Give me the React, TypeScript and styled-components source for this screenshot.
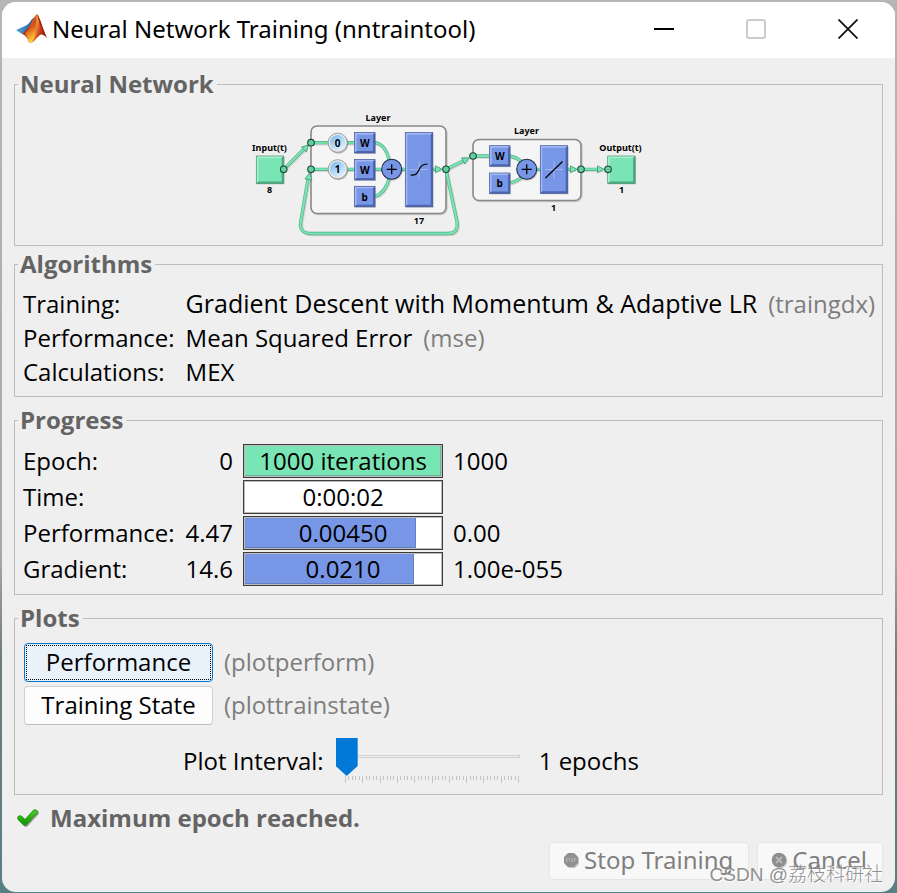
import React, { useState } from "react";
import styled, { createGlobalStyle } from "styled-components";

const FONT = '"Open Sans", "Noto Sans", sans-serif';
const WIDE_FONT = '"Noto Sans", "Open Sans", sans-serif';

const GlobalStyle = createGlobalStyle`
  *, *::before, *::after { box-sizing: border-box; }
  body {
    margin: 0;
    font-family: ${FONT};
    font-size: 24px;
    line-height: 34px;
    color: #000;
    background: #8d8d8d;
  }
  button, input { font: inherit; color: inherit; }
`;

const Desktop = styled.div`
  display: flex;
  min-height: 100vh;
  padding: 2px;
  background: linear-gradient(#b6b6b6 0%, #a8a8a8 62%, #6d7b7d 74%, #578084 100%);
`;

const Window = styled.main`
  position: relative;
  flex: 1;
  min-width: 0;
  display: flex;
  flex-direction: column;
  border-radius: 14px;
  overflow: hidden;
  background: #efefef;
`;

const TitleBar = styled.header`
  display: flex;
  align-items: center;
  height: 56px;
  padding: 0 1px 2px 13px;
  background: #fff;
`;

const Title = styled.h1`
  flex: 1;
  margin: 0 0 0 5px;
  font-family: ${WIDE_FONT};
  font-size: 24px;
  font-weight: 400;
  line-height: 34px;
  white-space: nowrap;
`;

const CaptionButton = styled.button`
  display: flex;
  align-items: center;
  justify-content: center;
  width: 92px;
  height: 54px;
  padding: 0;
  border: 0;
  background: transparent;
`;

const Body = styled.div`
  flex: 1;
  display: flex;
  flex-direction: column;
  padding: 12px;
`;

const Group = styled.fieldset<{ $gap?: number }>`
  min-width: 0;
  margin: ${(p) => p.$gap ?? 0}px 0 0;
  padding: 8px 8px 7px;
  border: 1px solid #bdbdbd;
`;

const GroupTitle = styled.legend`
  margin-left: -5px;
  padding: 0 3px 2px 2px;
  font-weight: 700;
  line-height: 27px;
  color: #646464;
`;

const DiagramBox = styled.div`
  display: flex;
  justify-content: center;
  padding-top: 1px;
`;

const AlgorithmList = styled.dl`
  display: grid;
  grid-template-columns: max-content 1fr;
  column-gap: 11px;
  margin: 0;
  white-space: nowrap;

  dt, dd { margin: 0; }
`;

const AlgorithmName = styled.span`
  font-size: 25px;
  line-height: 32px;
`;

const Hint = styled.span`
  margin-left: 11px;
  color: #7d7d7d;
`;

const ProgressGrid = styled.div`
  display: grid;
  grid-template-columns: max-content max-content 200px 1fr;
  gap: 2px 10px;
  padding: 1px 0;
  white-space: nowrap;
`;

const Minimum = styled.span`
  padding-left: 1px;
  text-align: right;
`;

const Bar = styled.div`
  display: grid;
  height: 34px;
  padding: 1px;
  border: 1px solid #3c3c3c;
  background: #bcbcbc;

  > * { grid-area: 1 / 1; }
`;

const BarTrack = styled.div`
  background: #fff;
`;

const BarFill = styled.div<{ $color: string }>`
  height: 30px;
  background: ${(p) => p.$color};
  box-shadow: inset -1px -1px 0 rgba(60, 70, 110, 0.3);
`;

const BarText = styled.span`
  line-height: 30px;
  text-align: center;
`;

const PlotRow = styled.div`
  display: flex;
  align-items: center;
  margin: 2px 0 4px 1px;
  white-space: nowrap;

  & + & { margin-top: 0; }

  ${Hint} { padding-bottom: 2px; }
`;

const PlotButton = styled.button<{ $focused?: boolean }>`
  width: 189px;
  height: 39px;
  padding: 1px;
  border: 1px solid ${(p) => (p.$focused ? "#0078d4" : "#d0d0d0")};
  border-bottom-color: ${(p) => (p.$focused ? "#0078d4" : "#bcbcbc")};
  border-radius: 4px;
  background: ${(p) => (p.$focused ? "#e9f2fb" : "#fdfdfd")};

  span {
    display: block;
    padding-bottom: 2px;
    line-height: 31px;
    border: 1px dotted ${(p) => (p.$focused ? "#000" : "transparent")};
  }
`;

const IntervalRow = styled.div`
  display: flex;
  align-items: center;
  gap: 8px;
  padding: 9px 0 3px 160px;
  white-space: nowrap;

  label { padding-right: 4px; }
`;

const SliderBox = styled.div`
  width: 195px;
  height: 46px;
`;

const Slider = styled.input`
  appearance: none;
  display: block;
  width: 195px;
  height: 38px;
  margin: 0;
  background: linear-gradient(#f0f0f0, #f0f0f0) 12px 18px / 171px 1px no-repeat,
    linear-gradient(#d0d0d0, #d0d0d0) 11px 17px / 173px 3px no-repeat;

  &::-webkit-slider-runnable-track { height: 38px; }
  &::-webkit-slider-thumb {
    appearance: none;
    width: 22px;
    height: 38px;
    border: 0;
    border-radius: 0;
    background: #0078d7;
    clip-path: polygon(0 0, 100% 0, 100% 74%, 50% 100%, 0 74%);
  }
`;

const Ticks = styled.svg`
  display: block;
`;

const Status = styled.p`
  display: flex;
  align-items: center;
  gap: 11px;
  margin: 6px 0 7px 1px;
  font-weight: 700;
  color: #646464;
`;

const Actions = styled.div`
  display: flex;
  justify-content: flex-end;
  gap: 8px;
`;

const ActionButton = styled.button`
  display: flex;
  align-items: center;
  gap: 4px;
  height: 38px;
  padding: 0 15px 2px 13px;
  border: 1px solid #e6e6e6;
  border-radius: 4px;
  background: #f8f8f8;
  font-family: ${WIDE_FONT};
  white-space: nowrap;

  &:disabled { color: #808080; }
`;

const Watermark = styled.div`
  position: absolute;
  right: 12px;
  bottom: 5px;
  font-family: "Liberation Sans", "Noto Sans CJK SC", sans-serif;
  font-size: 19px;
  font-weight: 300;
  line-height: 24px;
  color: rgba(130, 130, 130, 0.9);
  text-shadow: 1px 1px 0 rgba(255, 255, 255, 0.8);
  white-space: nowrap;
  pointer-events: none;
`;

const DiagramSvg = styled.svg`
  display: block;
  font-family: ${WIDE_FONT};
  font-weight: 700;
`;

const GREEN = "#7ae5b4";
const GREEN_DARK = "#3f9a72";
const BLUE = "#7896e6";

const Block = ({ x, y, w, h, color = BLUE, label }: { x: number; y: number; w: number; h: number; color?: string; label?: string }) => {
  const light = color === BLUE ? "#a4b9f4" : "#a8f3d0";
  const dark = color === BLUE ? "#4c66b4" : "#48ab82";
  return (
    <g>
      <rect x={x + 1} y={y + 1} width={w} height={h} fill="#000" opacity="0.18" />
      <rect x={x} y={y} width={w} height={h} fill={color} />
      <path d={`M${x} ${y + h}V${y}H${x + w}l-2 2H${x + 2}V${y + h - 2}z`} fill={light} />
      <path d={`M${x} ${y + h}H${x + w}V${y}l-2 2V${y + h - 2}H${x + 2}z`} fill={dark} />
      <rect x={x} y={y} width={w} height={h} fill="none" stroke={color === BLUE ? "#465a94" : "#4d9175"} strokeWidth="0.7" />
      {label && (
        <text x={x + w / 2} y={y + h / 2 + 4} textAnchor="middle" fontSize="10">{label}</text>
      )}
    </g>
  );
};

const Wire = ({ d }: { d: string }) => (
  <g fill="none" strokeLinejoin="round">
    <path d={d} stroke="#000" strokeWidth="3.4" opacity="0.13" transform="translate(1 1)" />
    <path d={d} stroke="#4fae85" strokeWidth="3.3" />
    <path d={d} stroke={GREEN} strokeWidth="2.1" />
  </g>
);

const Arrow = ({ x, y, angle = 0 }: { x: number; y: number; angle?: number }) => (
  <path d="M0 0L-6.5 -3.5V3.5z" fill={GREEN} stroke={GREEN_DARK} strokeWidth="0.8" transform={`translate(${x} ${y}) rotate(${angle})`} />
);

const Node = ({ x, y }: { x: number; y: number }) => (
  <circle cx={x} cy={y} r="3.3" fill="#62cf9d" stroke="#1d4837" strokeWidth="1.1" />
);

const Sum = ({ x, y }: { x: number; y: number }) => (
  <g>
    <circle cx={x + 0.7} cy={y + 1} r="10.4" fill="#000" opacity="0.2" />
    <circle cx={x} cy={y} r="10" fill={BLUE} stroke="#222c4a" strokeWidth="1.1" />
    <path d={`M${x - 5} ${y}h10M${x} ${y - 5}v10`} stroke="#000" strokeWidth="1.3" />
  </g>
);

const Delay = ({ x, y, label }: { x: number; y: number; label: string }) => (
  <g>
    <circle cx={x + 0.7} cy={y + 1} r="10" fill="#000" opacity="0.25" />
    <circle cx={x} cy={y} r="9.6" fill="#e9e9e9" stroke="#8b8b8b" strokeWidth="0.8" />
    <circle cx={x} cy={y} r="7.8" fill="url(#dial)" />
    <text x={x} y={y + 4} textAnchor="middle" fontSize="10">{label}</text>
  </g>
);

const LayerFrame = ({ x, y, w, h }: { x: number; y: number; w: number; h: number }) => (
  <g>
    <rect x={x + 1} y={y + 1} width={w} height={h} rx="6" fill="none" stroke="#000" strokeWidth="1.4" opacity="0.15" />
    <rect x={x} y={y} width={w} height={h} rx="6" fill="#f5f5f5" stroke="#888" strokeWidth="1.6" />
  </g>
);

const Caption = ({ x, y, children }: { x: number; y: number; children: string }) => (
  <text x={x} y={y} textAnchor="middle" fontSize="9">{children}</text>
);

const NetworkDiagram = () => (
  <DiagramSvg width="401" height="130" viewBox="248 108 401 130" role="img" aria-label="Network diagram">
    <defs>
      <linearGradient id="dial" x1="0" y1="0" x2="0.7" y2="1">
        <stop offset="0" stopColor="#74b8f2" />
        <stop offset="1" stopColor="#dff2ff" />
      </linearGradient>
    </defs>
    <LayerFrame x={311} y={126} w={135} h={87.5} />
    <LayerFrame x={473} y={139.5} w={108} h={61} />

    <Block x={256.3} y={156} w={27.4} h={27.4} color={GREEN} />
    <Block x={607.7} y={156} w={27.4} h={27.4} color={GREEN} />

    <Wire d="M283.7 169.3L306 147" />
    <Wire d="M446 170L457 222Q458.500 233.500 448 233.500H311Q299.500 233.500 300.500 223L308 179" />
    <Wire d="M311 142.700H354M311 169.300H405M433 169.300H440" />
    <Wire d="M375 142.700Q385 144 389 160M375 196.500Q385 193 389 179" />
    <Wire d="M446 169.300L467 159M473 156H489M510 156Q516 157 521 161M510 183Q517 181 521 178M537 169.300H541M568 169.300H575M581 169.300H602" />

    <Arrow x={308.5} y={145} angle={-45} />
    <Arrow x={309.5} y={173} angle={-81} />
    <Arrow x={442} y={169.3} />
    <Arrow x={469} y={158} angle={-27} />
    <Arrow x={577} y={169.3} />
    <Arrow x={604} y={169.3} />

    <Delay x={337.7} y={142.7} label="0" />
    <Delay x={337.7} y={169.3} label="1" />
    <Block x={354.5} y={132.5} w={20.5} h={20.5} label="W" />
    <Block x={354.5} y={159.5} w={20.5} h={20.5} label="W" />
    <Block x={354.5} y={186.3} w={20.5} h={20.5} label="b" />
    <Sum x={391.7} y={169.3} />
    <Block x={405.3} y={132.5} w={27.4} h={74.3} />
    <path d="M419 161v18M410 169.500h18" stroke="#a3b6f0" strokeWidth="1" />
    <path d="M410.500 175C422 176 416 164 427.500 164" fill="none" stroke="#000" strokeWidth="1.2" />

    <Block x={489.5} y={145.700} w={20.5} h={20.5} label="W" />
    <Block x={489.5} y={173} w={20.5} h={20.5} label="b" />
    <Sum x={526.7} y={169.3} />
    <Block x={540.3} y={145.700} w={27.4} h={47.6} />
    <path d="M554 161v18M545 169.500h18" stroke="#a3b6f0" strokeWidth="1" />
    <path d="M545.500 178L562.500 161.500" stroke="#000" strokeWidth="1.2" />

    <Node x={283.7} y={169.3} />
    <Node x={311} y={142.7} />
    <Node x={311} y={169.3} />
    <Node x={446} y={169.3} />
    <Node x={473} y={156} />
    <Node x={581} y={169.3} />
    <Node x={608} y={169.3} />

    <Caption x={378} y={121}>Layer</Caption>
    <Caption x={269.5} y={151}>Input(t)</Caption>
    <Caption x={269.5} y={193}>8</Caption>
    <Caption x={419} y={224}>17</Caption>
    <Caption x={526.5} y={134}>Layer</Caption>
    <Caption x={553.5} y={211}>1</Caption>
    <Caption x={620.5} y={151}>Output(t)</Caption>
    <Caption x={621.5} y={193}>1</Caption>
  </DiagramSvg>
);

const MatlabLogo = () => (
  <svg width="32" height="32" viewBox="0 0 32 32" aria-hidden="true">
    <defs>
      <linearGradient id="peak" x1="0" y1="0" x2="1" y2="0.3">
        <stop offset="0" stopColor="#5b1a16" />
        <stop offset="0.4" stopColor="#c8401b" />
        <stop offset="0.62" stopColor="#f59a3c" />
        <stop offset="0.8" stopColor="#d0431f" />
        <stop offset="1" stopColor="#8e1d14" />
      </linearGradient>
      <linearGradient id="wing" x1="0" y1="0" x2="1" y2="0">
        <stop offset="0" stopColor="#4fa3dd" />
        <stop offset="1" stopColor="#1d5a9a" />
      </linearGradient>
      <linearGradient id="base" x1="0" y1="0" x2="0.3" y2="1">
        <stop offset="0" stopColor="#8a2014" />
        <stop offset="0.55" stopColor="#e0601c" />
        <stop offset="1" stopColor="#ffd23e" />
      </linearGradient>
    </defs>
    <path d="M1 17L10 13C13 12 15 9 17 6L20 4L13 17L7 21z" fill="url(#wing)" />
    <path d="M7 21L12 16C16 12 18 4 22 1C25 4 28 17 32 25C28 21 26 20 23 24C20 27 18 30 14 30C13 26 11 22 7 21z" fill="url(#peak)" />
    <path d="M10 20C16 17 18 8 21 4C22 12 21 22 18 27C17 29 15 30 14 30C13 26 12 23 10 20z" fill="url(#base)" />
    <path d="M22 1C25 4 28 17 32 25C29 21 27 16 25 12z" fill="#a32015" />
  </svg>
);

const CheckIcon = () => (
  <svg width="24" height="22" viewBox="0 0 24 22" aria-hidden="true">
    <defs>
      <linearGradient id="tick" x1="0" y1="0" x2="0" y2="1">
        <stop offset="0" stopColor="#46c624" />
        <stop offset="1" stopColor="#179a0b" />
      </linearGradient>
    </defs>
    <path d="M5 11L10 16L20 5" transform="translate(1 1)" fill="none" stroke="#000" strokeOpacity="0.35" strokeWidth="5.5" strokeLinecap="round" strokeLinejoin="round" />
    <path d="M5 11L10 16L20 5" fill="none" stroke="#249512" strokeWidth="5.4" strokeLinecap="round" strokeLinejoin="round" />
    <path d="M5 11L10 16L20 5" fill="none" stroke="url(#tick)" strokeWidth="4" strokeLinecap="round" strokeLinejoin="round" />
  </svg>
);

const StopIcon = () => (
  <svg width="17" height="17" viewBox="0 0 17 17" aria-hidden="true">
    <path d="M6 2h6l4 4v6l-4 4H6l-4-4V6z" fill="#000" opacity="0.2" />
    <path d="M5 1h6l4 4v6l-4 4H5l-4-4V5z" fill="#909090" />
    <path d="M4.500 6.500h-1.500v1.500h1.500v1.500H3M5.500 6.500h2M6.500 6.500v3M8.500 6.500h1.500v3H8.500zM11.500 10V6.500h1.500v1.500h-1.500" fill="none" stroke="#b2b2b2" strokeWidth="0.8" />
  </svg>
);

const CancelIcon = () => (
  <svg width="17" height="17" viewBox="0 0 17 17" aria-hidden="true">
    <circle cx="9" cy="9" r="7.300" fill="#000" opacity="0.2" />
    <circle cx="8" cy="8" r="7.300" fill="#8e8e8e" />
    <path d="M5 5l6 6M11 5l-6 6" stroke="#b8b8b8" strokeWidth="2" />
  </svg>
);

const TickScale = () => (
  <Ticks width="195" height="8" viewBox="0 0 195 8" aria-hidden="true">
    {Array.from({ length: 51 }, (_, i) => (
      <rect key={i} x={Math.round(9 + i * 3.46)} y="0" width="1" height={i % 5 === 0 ? 7 : 4} fill="#c4c4c4" />
    ))}
  </Ticks>
);

const progressRows = [
  { label: "Epoch:", min: "0", text: "1000 iterations", max: "1000", fill: 100, color: GREEN },
  { label: "Time:", min: "", text: "0:00:02", max: "", fill: 0, color: BLUE },
  { label: "Performance:", min: "4.47", text: "0.00450", max: "0.00", fill: 87, color: BLUE },
  { label: "Gradient:", min: "14.6", text: "0.0210", max: "1.00e-055", fill: 86, color: BLUE },
];

export default function App() {
  const [interval, setInterval] = useState(1);
  return (
    <>
      <GlobalStyle />
      <Desktop>
        <Window>
          <TitleBar>
            <MatlabLogo />
            <Title>Neural Network Training (nntraintool)</Title>
            <CaptionButton aria-label="Minimize">
              <svg width="20" height="20"><path d="M0 10h20" stroke="#000" strokeWidth="2" /></svg>
            </CaptionButton>
            <CaptionButton aria-label="Maximize" disabled>
              <svg width="20" height="20"><rect x="1" y="1" width="18" height="18" rx="2" fill="none" stroke="#ccc" strokeWidth="2" /></svg>
            </CaptionButton>
            <CaptionButton aria-label="Close">
              <svg width="20" height="20"><path d="M0.500 0.500l19 19M19.500 0.500l-19 19" stroke="#111" strokeWidth="1.800" /></svg>
            </CaptionButton>
          </TitleBar>
          <Body>
            <Group>
              <GroupTitle>Neural Network</GroupTitle>
              <DiagramBox>
                <NetworkDiagram />
              </DiagramBox>
            </Group>

            <Group $gap={4}>
              <GroupTitle>Algorithms</GroupTitle>
              <AlgorithmList>
                <dt>Training:</dt>
                <dd><AlgorithmName>Gradient Descent with Momentum &amp; Adaptive LR</AlgorithmName><Hint>(traingdx)</Hint></dd>
                <dt>Performance:</dt>
                <dd>Mean Squared Error<Hint>(mse)</Hint></dd>
                <dt>Calculations:</dt>
                <dd>MEX</dd>
              </AlgorithmList>
            </Group>

            <Group $gap={9}>
              <GroupTitle>Progress</GroupTitle>
              <ProgressGrid>
                {progressRows.map((row) => (
                  <React.Fragment key={row.label}>
                    <span>{row.label}</span>
                    <Minimum>{row.min}</Minimum>
                    <Bar role="progressbar" aria-label={row.label} aria-valuenow={row.fill} aria-valuetext={row.text}>
                      <BarTrack>
                        {row.fill > 0 && <BarFill $color={row.color} style={{ width: `${row.fill}%` }} />}
                      </BarTrack>
                      <BarText>{row.text}</BarText>
                    </Bar>
                    <span>{row.max}</span>
                  </React.Fragment>
                ))}
              </ProgressGrid>
            </Group>

            <Group $gap={9}>
              <GroupTitle>Plots</GroupTitle>
              <PlotRow>
                <PlotButton $focused><span>Performance</span></PlotButton>
                <Hint>(plotperform)</Hint>
              </PlotRow>
              <PlotRow>
                <PlotButton><span>Training State</span></PlotButton>
                <Hint>(plottrainstate)</Hint>
              </PlotRow>
              <IntervalRow>
                <label htmlFor="interval">Plot Interval:</label>
                <SliderBox>
                  <Slider id="interval" type="range" min={1} max={100} value={interval} onChange={(e) => setInterval(Number(e.target.value))} />
                  <TickScale />
                </SliderBox>
                <output htmlFor="interval">{interval} epochs</output>
              </IntervalRow>
            </Group>

            <Status><CheckIcon />Maximum epoch reached.</Status>
            <Actions>
              <ActionButton disabled><StopIcon />Stop Training</ActionButton>
              <ActionButton disabled><CancelIcon />Cancel</ActionButton>
            </Actions>
          </Body>
          <Watermark>CSDN @荔枝科研社</Watermark>
        </Window>
      </Desktop>
    </>
  );
}
